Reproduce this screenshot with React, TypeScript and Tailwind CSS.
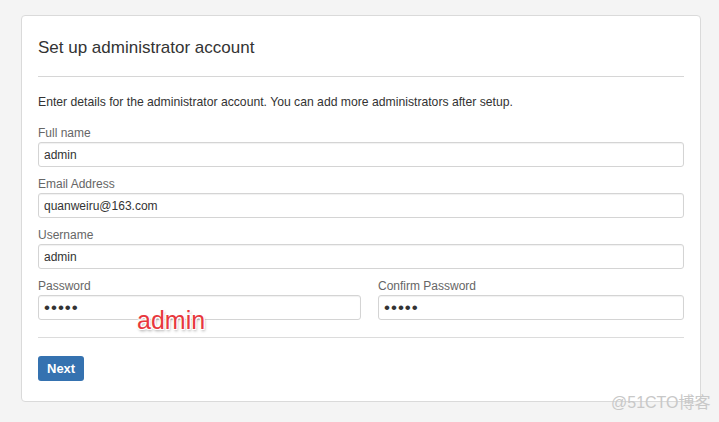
import React from 'react';

const font = { fontFamily: '"Liberation Sans", Arial, sans-serif' };

function Field({ label, value, className = '' }: { label: string; value: string; className?: string }) {
  return (
    <div className={className}>
      <label className="block h-[16px] leading-[16px] text-[12px] text-[#666]">{label}</label>
      <input
        readOnly
        value={value}
        className="mt-px block w-full h-[25px] px-[5px] text-[12px] text-[#333] bg-white border border-[#d4d4d4] rounded-[3px] shadow-[inset_0_1px_1px_rgba(0,0,0,0.06)] outline-none"
      />
    </div>
  );
}

export default function App() {
  return (
    <div style={font} className="relative w-full h-[422px] overflow-hidden bg-[#f4f4f4] pt-[15px] pl-[21px]">
      <div className="w-[680px] h-[387px] bg-white border border-[#dadada] rounded-[4px] px-[16px] pt-[22px]">
        <h1 className="h-[20px] leading-[20px] text-[17px] text-[#333]">Set up administrator account</h1>
        <div className="mt-[18px] h-px bg-[#d6d6d6]" />

        <p className="mt-[17px] h-[16px] leading-[16px] text-[12.2px] text-[#333]">
          Enter details for the administrator account. You can add more administrators after setup.
        </p>

        <Field className="mt-[15px]" label="Full name" value="admin" />
        <Field className="mt-[9px]" label="Email Address" value="quanweiru@163.com" />
        <Field className="mt-[9px]" label="Username" value="admin" />

        <div className="mt-[9px] flex gap-[17px]">
          <div className="w-[323px]">
            <label className="block h-[16px] leading-[16px] text-[12px] text-[#666]">Password</label>
            <div className="mt-px h-[25px] px-[5px] flex items-center text-[17px] tracking-[1px] text-[#333] border border-[#d4d4d4] rounded-[3px] shadow-[inset_0_1px_1px_rgba(0,0,0,0.06)]">
              •••••
            </div>
          </div>
          <div className="flex-1">
            <label className="block h-[16px] leading-[16px] text-[12px] text-[#666]">Confirm Password</label>
            <div className="mt-px h-[25px] px-[5px] flex items-center text-[17px] tracking-[1px] text-[#333] border border-[#d4d4d4] rounded-[3px] shadow-[inset_0_1px_1px_rgba(0,0,0,0.06)]">
              •••••
            </div>
          </div>
        </div>

        <div className="mt-[17px] h-px bg-[#dcdcdc]" />

        <button className="mt-[18px] h-[25px] px-[9px] rounded-[3px] bg-[#3572b0] text-white text-[13px] font-bold">
          Next
        </button>
      </div>

      {/* annotation over the password field */}
      <div className="absolute left-[137px] top-[305px] text-[25px] leading-[30px] text-[#e8383d] [text-shadow:-1px_-1px_0_#fff,1px_-1px_0_#fff,-1px_1px_0_#fff,1px_1px_0_#fff,1px_2px_3px_rgba(0,0,0,0.4)]">
        admin
      </div>

      {/* watermark */}
      <div
        style={{ fontFamily: '"Liberation Sans", "Noto Sans CJK SC", sans-serif' }}
        className="absolute left-[611px] top-[393px] text-[16px] leading-[20px] text-[#c8c8c8]"
      >
        @51CTO博客
      </div>
    </div>
  );
}
